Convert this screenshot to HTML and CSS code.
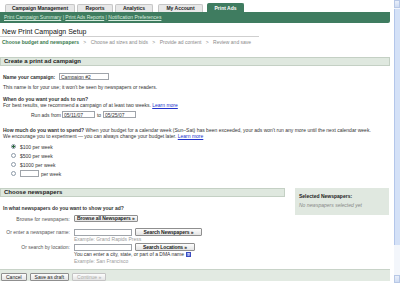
FILE: index.html
```html
<!DOCTYPE html>
<html lang="en">
<head>
    <meta charset="UTF-8">
    <title>New Print Campaign Setup</title>
    <link rel="stylesheet" href="styles.css">
</head>
<body>
<div class="window">
    <div class="page">
        <div class="tabs">
            <span class="tab tab-cm">Campaign Management</span>
            <span class="tab tab-reports">Reports</span>
            <span class="tab tab-analytics">Analytics</span>
            <span class="tab tab-account">My Account</span>
            <span class="tab tab-active">Print Ads</span>
        </div>
        <div class="subnav">
            <a href="#">Print Campaign Summary</a> | <a href="#">Print Ads Reports</a> | <a href="#">Notification Preferences</a>
        </div>

        <h1>New Print Campaign Setup</h1>
        <div class="steps">
            <span class="step-current">Choose budget and newspapers</span>
            <span class="step-sep">&gt;</span>
            <span>Choose ad sizes and bids</span>
            <span class="step-sep">&gt;</span>
            <span>Provide ad content</span>
            <span class="step-sep">&gt;</span>
            <span>Review and save</span>
        </div>

        <!-- Campaign basics -->
        <div class="section-bar">Create a print ad campaign</div>
        <div class="content">
            <div class="name-row">
                <strong>Name your campaign:</strong>
                <input class="field field-name" type="text" value="Campaign #2">
            </div>
            <p class="line hint-top">This name is for your use; it won't be seen by newspapers or readers.</p>

            <p class="line question"><strong>When do you want your ads to run?</strong></p>
            <p class="line">For best results, we recommend a campaign of at least two weeks. <a href="#">Learn more</a></p>
            <div class="dates-row">
                <span>Run ads from</span>
                <input class="field field-date" type="text" value="05/11/07">
                <span class="to">to</span>
                <input class="field field-date" type="text" value="05/25/07">
            </div>

            <p class="line spend"><strong>How much do you want to spend?</strong> When your budget for a calendar week (Sun&ndash;Sat) has been exceeded, your ads won't run any more until the next calendar week.</p>
            <p class="line">We encourage you to experiment &mdash; you can always change your budget later. <a href="#">Learn more</a></p>
            <div class="budgets">
                <label class="budget"><input type="radio" name="budget" checked> $100 per week</label>
                <label class="budget"><input type="radio" name="budget"> $500 per week</label>
                <label class="budget"><input type="radio" name="budget"> $1000 per week</label>
                <label class="budget"><input type="radio" name="budget"> <input class="field field-amount" type="text"> per week</label>
            </div>
        </div>

        <!-- Newspapers -->
        <div class="papers">
            <div class="papers-main">
                <div class="section-bar section-bar-short">Choose newspapers</div>
                <div class="content">
                    <p class="line question-papers"><strong>In what newspapers do you want to show your ad?</strong></p>
                    <div class="form-row row-browse">
                        <span class="form-label">Browse for newspapers:</span>
                        <button class="btn btn-strong">Browse all Newspapers &raquo;</button>
                    </div>
                    <div class="form-row row-name">
                        <span class="form-label">Or enter a newspaper name:</span>
                        <input class="field field-search" type="text">
                        <button class="btn btn-strong">Search Newspapers &raquo;</button>
                    </div>
                    <p class="line example">Example: Grand Rapids Press</p>
                    <div class="form-row row-location">
                        <span class="form-label">Or search by location:</span>
                        <input class="field field-search" type="text">
                        <button class="btn btn-strong">Search Locations &raquo;</button>
                    </div>
                    <p class="line note">You can enter a city, state, or part of a DMA name <span class="help">?</span></p>
                    <p class="line example example-last">Example: San Francisco</p>
                </div>
            </div>
            <div class="selected-box">
                <strong>Selected Newspapers:</strong>
                <em>No newspapers selected yet</em>
            </div>
        </div>

        <div class="actions">
            <button class="btn">Cancel</button>
            <button class="btn">Save as draft</button>
            <button class="btn btn-disabled">Continue &raquo;</button>
        </div>
    </div>

    <!-- browser scrollbar -->
    <div class="scrollbar">
        <span class="arrow arrow-up"></span>
        <span class="thumb"></span>
        <span class="track"></span>
        <span class="arrow arrow-down"></span>
    </div>
</div>
</body>
</html>
```

FILE: styles.css
```css
body {
    margin: 0;
    font-family: "Liberation Sans", Arial, sans-serif;
    font-size: 5px;
    color: #333;
    background-color: #fff;
}

p {
    margin: 0;
}

a {
    color: #2233cc;
    text-decoration: underline;
}

.window {
    display: flex;
    height: 283px;
    overflow: hidden;
}

.page {
    width: 394px;
    flex-shrink: 0;
}

/* Top tabs */
.tabs {
    display: flex;
    align-items: flex-end;
    height: 12px;
    padding-left: 5px;
}

.tab {
    box-sizing: border-box;
    height: 8px;
    line-height: 7px;
    text-align: center;
    font-weight: bold;
    color: #222;
    background-color: #e8e8e8;
    border: 1px solid #c6c6c6;
    border-bottom: none;
    border-radius: 2px 2px 0 0;
    margin-right: 2px;
}

.tab-cm { width: 70px; }
.tab-reports { width: 36px; }
.tab-analytics { width: 38px; margin-right: 5px; }
.tab-account { width: 45px; margin-right: 4px; }

.tab-active {
    width: 37px;
    height: 9px;
    line-height: 8px;
    color: #fff;
    background-color: #3f7c60;
    border-color: #3f7c60;
}

.subnav {
    box-sizing: border-box;
    width: 390px;
    height: 11px;
    line-height: 11px;
    padding-left: 4px;
    color: #cfe4d6;
    background-color: #3f7c60;
    border-radius: 0 0 2px 0;
}

.subnav a {
    color: #d8ecdf;
}

h1 {
    width: 257px;
    height: 8px;
    margin: 5px 0 0 0;
    padding-left: 2px;
    font-size: 7px;
    font-weight: normal;
    line-height: 8px;
    color: #111;
    border-bottom: 1px solid #cfcfcf;
}

.steps {
    margin-top: 2px;
    padding-left: 2px;
    line-height: 6px;
    color: #8a8a8a;
}

.step-current {
    color: #3a7a4e;
    font-weight: bold;
}

.step-sep {
    margin: 0 3px;
}

/* Grey-green section headers */
.section-bar {
    box-sizing: border-box;
    width: 390px;
    height: 9px;
    line-height: 7px;
    margin-top: 12px;
    padding-left: 3px;
    font-size: 6px;
    font-weight: bold;
    color: #222;
    background-color: #dfe8df;
    border: 1px solid #c4d0c4;
}

.section-bar-short {
    width: 285px;
    margin-top: 0;
}

.content {
    padding-left: 3px;
}

.line {
    line-height: 6px;
}

.field {
    box-sizing: border-box;
    height: 7px;
    padding: 0 1px;
    font-family: inherit;
    font-size: 5px;
    color: #333;
    border: 1px solid #9fa4aa;
    background-color: #fff;
    outline: none;
}

.name-row {
    display: flex;
    align-items: center;
    margin-top: 7px;
    height: 7px;
}

.name-row strong {
    width: 56px;
}

.field-name {
    width: 50px;
}

.hint-top {
    margin-top: 4px;
}

.question {
    margin-top: 6px;
}

.dates-row {
    display: flex;
    align-items: center;
    height: 7px;
    margin-top: 3px;
    padding-left: 28px;
}

.dates-row span:first-child {
    width: 31px;
}

.field-date {
    width: 33px;
}

.to {
    width: 8px;
    text-align: center;
}

.spend {
    margin-top: 9px;
}

.budgets {
    margin-top: 3px;
    padding-left: 8px;
}

.budget {
    display: flex;
    align-items: center;
    height: 9px;
}

.budget input[type="radio"] {
    appearance: none;
    box-sizing: border-box;
    width: 5px;
    height: 5px;
    margin: 0 4px 0 0;
    border: 1px solid #8d9aa8;
    border-radius: 50%;
    background-color: #fff;
}

.budget input[type="radio"]:checked {
    background: radial-gradient(circle, #2d6a3c 0 1px, #fff 1.2px);
}

.field-amount {
    width: 19px;
    margin-right: 2px;
}

/* Newspapers section */
.papers {
    display: flex;
    align-items: flex-start;
    margin-top: 10px;
}

.papers-main {
    width: 295px;
}

.question-papers {
    margin-top: 8px;
}

.form-row {
    display: flex;
    align-items: center;
}

.form-label {
    width: 67px;
    margin-right: 4px;
    text-align: right;
    color: #555;
}

.row-browse {
    margin-top: 4px;
    height: 7px;
}

.row-name {
    margin-top: 6px;
    height: 8px;
}

.row-location {
    margin-top: 1px;
    height: 8px;
}

.field-search {
    width: 58px;
    height: 7px;
    margin-right: 3px;
}

.example,
.note {
    padding-left: 71px;
}

.example {
    color: #9a9a9a;
}

.example-last {
    margin-top: 1px;
}

.note {
    display: flex;
    align-items: center;
    gap: 2px;
}

.help {
    box-sizing: border-box;
    width: 5px;
    height: 5px;
    line-height: 4px;
    font-size: 4px;
    font-weight: bold;
    text-align: center;
    color: #fff;
    background-color: #7383e0;
    border: 1px solid #3a4cc0;
}

.btn {
    box-sizing: border-box;
    height: 7px;
    padding: 0 2px;
    font-family: inherit;
    font-size: 5px;
    line-height: 5px;
    white-space: nowrap;
    text-align: center;
    color: #222;
    background: linear-gradient(#fdfdfd, #e4e4e4);
    border: 1px solid #8f8f8f;
    border-radius: 1px;
}

.btn-strong {
    font-weight: bold;
    letter-spacing: -0.1px;
}

.row-browse .btn {
    min-width: 52px;
}

.row-name .btn {
    width: 67px;
    height: 8px;
}

.row-location .btn {
    width: 60px;
    height: 8px;
}

.btn-disabled {
    color: #aaa;
    border-color: #c4c4c4;
}

.selected-box {
    box-sizing: border-box;
    display: flex;
    flex-direction: column;
    gap: 3px;
    width: 94px;
    height: 27px;
    padding: 5px 4px;
    background-color: #e0e8e0;
}

.selected-box strong {
    color: #222;
}

.selected-box em {
    color: #888;
}

.actions {
    box-sizing: border-box;
    display: flex;
    gap: 3px;
    width: 390px;
    height: 12px;
    margin-top: 5px;
    padding: 3px 0 0 1px;
    background-color: #e2eae2;
    border-top: 1px solid #c8d3c8;
}

.actions .btn {
    height: 8px;
    padding: 0 4px;
}

/* Browser scrollbar */
.scrollbar {
    display: flex;
    flex-direction: column;
    width: 6px;
    background-color: #f3f6fb;
}

.arrow {
    height: 8px;
    box-sizing: border-box;
    border: 1px solid #b8c8e6;
    background: linear-gradient(#e9effa, #cfdcf3);
}

.thumb {
    height: 236px;
    margin-top: 1px;
    background-color: #d4e1f7;
    border-left: 1px solid #b3c6ea;
}

.track {
    flex-grow: 1;
}
```
